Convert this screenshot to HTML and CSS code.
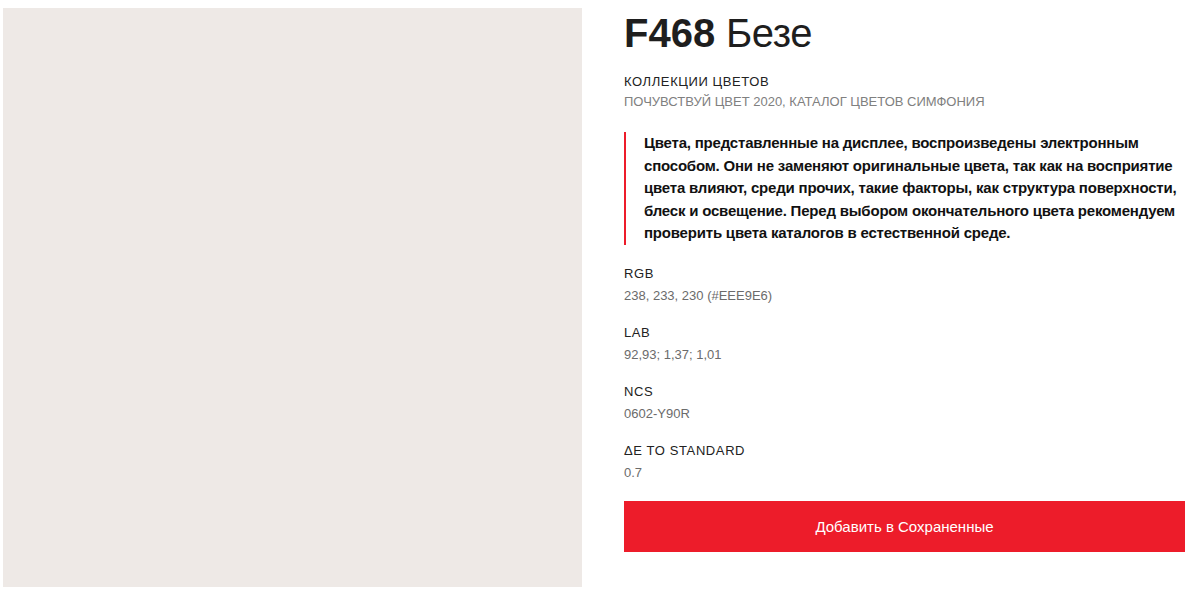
FILE: index.html
```html
<!DOCTYPE html>
<html lang="ru">
<head>
<meta charset="utf-8">
<title>F468 Безе</title>
<link rel="stylesheet" href="styles.css">
</head>
<body>
<main class="page">
  <div class="swatch"></div>
  <section class="info">
    <h1 class="title"><span class="code">F468</span> Безе</h1>
    <div class="collections">
      <div class="label">Коллекции цветов</div>
      <div class="muted">ПОЧУВСТВУЙ ЦВЕТ 2020, КАТАЛОГ ЦВЕТОВ СИМФОНИЯ</div>
    </div>
    <blockquote class="notice">Цвета, представленные на дисплее, воспроизведены электронным способом. Они не заменяют оригинальные цвета, так как на восприятие цвета влияют, среди прочих, такие факторы, как структура поверхности, блеск и освещение. Перед выбором окончательного цвета рекомендуем проверить цвета каталогов в естественной среде.</blockquote>
    <dl class="specs">
      <div class="spec"><dt class="label">RGB</dt><dd class="value">238, 233, 230 (#EEE9E6)</dd></div>
      <div class="spec"><dt class="label">LAB</dt><dd class="value">92,93; 1,37; 1,01</dd></div>
      <div class="spec"><dt class="label">NCS</dt><dd class="value">0602-Y90R</dd></div>
      <div class="spec"><dt class="label">ΔE to standard</dt><dd class="value">0.7</dd></div>
    </dl>
    <button class="save" type="button">Добавить в Сохраненные</button>
  </section>
</main>
</body>
</html>
```

FILE: styles.css
```css
html, body {
  margin: 0;
  padding: 0;
  background: #ffffff;
}

body {
  font-family: "Liberation Sans", Arial, sans-serif;
  color: #222222;
}

.page {
  display: flex;
  align-items: flex-start;
  gap: 42px;
  padding: 8px 15px 0 3px;
}

.swatch {
  flex: 0 0 579px;
  height: 579px;
  background: #eee9e6;
}

.info {
  flex: 0 0 561px;
  display: flex;
  flex-direction: column;
}

.title {
  margin: 1px 0 0 0;
  font-size: 40px;
  line-height: 48px;
  font-weight: 400;
  color: #1e1e1e;
  letter-spacing: -0.4px;
}

.code {
  font-weight: 700;
  letter-spacing: 0;
}

.collections {
  margin-top: 15px;
}

.label {
  font-size: 13px;
  line-height: 20px;
  letter-spacing: 0.6px;
  text-transform: uppercase;
  color: #222222;
}

.muted {
  font-size: 13px;
  line-height: 20px;
  color: #808080;
}

.notice {
  margin: 20px 0 0 0;
  padding: 0 0 0 18px;
  border-left: 2px solid #ed1c2a;
  font-size: 15px;
  font-weight: 700;
  line-height: 22.5px;
  letter-spacing: -0.2px;
  color: #111111;
}

.specs {
  margin: 19px 0 0 0;
  display: flex;
  flex-direction: column;
  gap: 17px;
}

.spec {
  display: flex;
  flex-direction: column;
}

.spec dt {
  margin: 0;
}

.value {
  margin: 2px 0 0 0;
  font-size: 13px;
  line-height: 20px;
  color: #6b6b6b;
}

.save {
  margin-top: 18px;
  height: 51px;
  width: 100%;
  border: 0;
  background: #ed1c2a;
  color: #ffffff;
  font-family: "Liberation Sans", Arial, sans-serif;
  font-size: 15px;
  cursor: pointer;
}
```
